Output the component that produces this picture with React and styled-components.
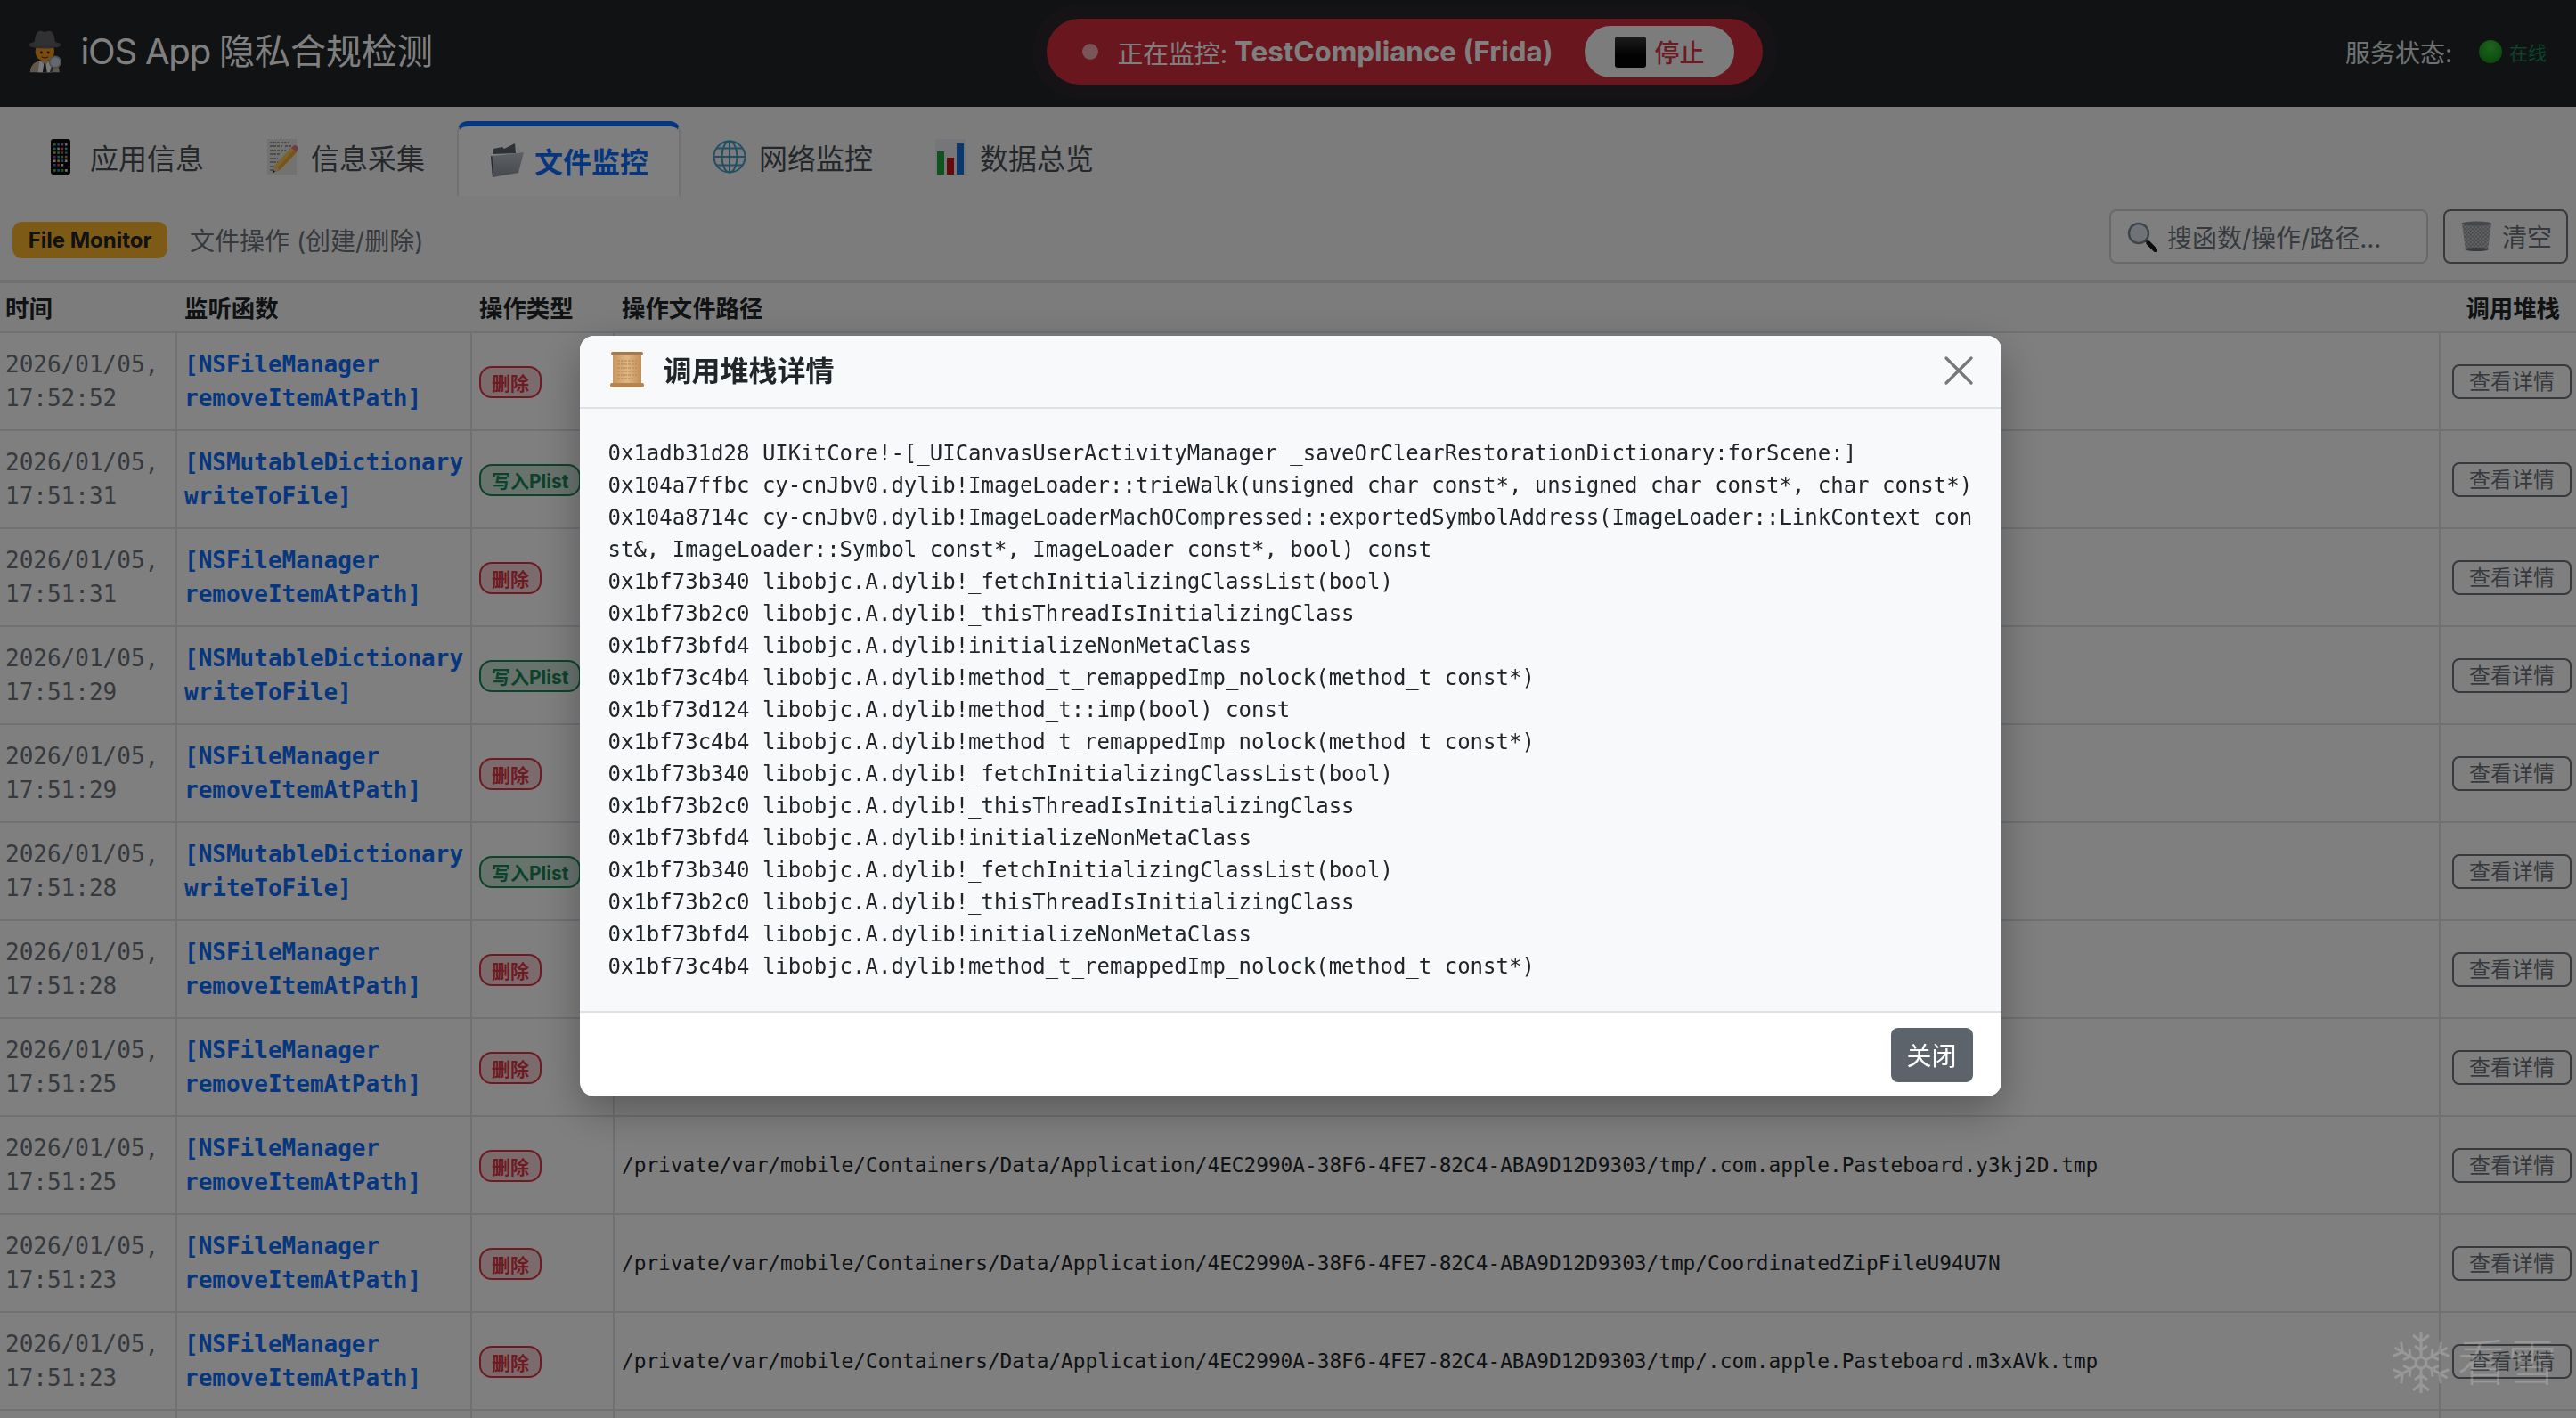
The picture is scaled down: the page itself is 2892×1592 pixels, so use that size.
import React from "react";
import styled, { createGlobalStyle } from "styled-components";

const SANS = `"Inter", "Noto Sans CJK SC", sans-serif`;
const MONO = `"DejaVu Sans Mono", "Noto Sans CJK SC", monospace`;

const GlobalStyle = createGlobalStyle`
  html, body {
    margin: 0;
    padding: 0;
    background: #fff;
    overflow: hidden;
  }
  * { box-sizing: border-box; }
`;

const BASE = "/private/var/mobile/Containers/Data/Application/4EC2990A-38F6-4FE7-82C4-ABA9D12D9303/tmp/";

const REMOVE = ["[NSFileManager", "removeItemAtPath]"];
const WRITE = ["[NSMutableDictionary", "writeToFile]"];

const rows = [
  { time: "17:52:52", fn: REMOVE, path: BASE + ".com.apple.uikit.tmp" },
  { time: "17:51:31", fn: WRITE, path: BASE + "state.plist" },
  { time: "17:51:31", fn: REMOVE, path: BASE + "state.plist" },
  { time: "17:51:29", fn: WRITE, path: BASE + "state.plist" },
  { time: "17:51:29", fn: REMOVE, path: BASE + "state.plist" },
  { time: "17:51:28", fn: WRITE, path: BASE + "state.plist" },
  { time: "17:51:28", fn: REMOVE, path: BASE + "state.plist" },
  { time: "17:51:25", fn: REMOVE, path: BASE + "state.plist" },
  { time: "17:51:25", fn: REMOVE, path: BASE + ".com.apple.Pasteboard.y3kj2D.tmp" },
  { time: "17:51:23", fn: REMOVE, path: BASE + "CoordinatedZipFileU94U7N" },
  { time: "17:51:23", fn: REMOVE, path: BASE + ".com.apple.Pasteboard.m3xAVk.tmp" },
];

const FETCH = "0x1bf73b340 libobjc.A.dylib!_fetchInitializingClassList(bool)";
const THIS = "0x1bf73b2c0 libobjc.A.dylib!_thisThreadIsInitializingClass";
const INIT = "0x1bf73bfd4 libobjc.A.dylib!initializeNonMetaClass";
const REMAP = "0x1bf73c4b4 libobjc.A.dylib!method_t_remappedImp_nolock(method_t const*)";

const stack = [
  "0x1adb31d28 UIKitCore!-[_UICanvasUserActivityManager _saveOrClearRestorationDictionary:forScene:]",
  "0x104a7ffbc cy-cnJbv0.dylib!ImageLoader::trieWalk(unsigned char const*, unsigned char const*, char const*)",
  "0x104a8714c cy-cnJbv0.dylib!ImageLoaderMachOCompressed::exportedSymbolAddress(ImageLoader::LinkContext const&, ImageLoader::Symbol const*, ImageLoader const*, bool) const",
  FETCH,
  THIS,
  INIT,
  REMAP,
  "0x1bf73d124 libobjc.A.dylib!method_t::imp(bool) const",
  REMAP,
  FETCH,
  THIS,
  INIT,
  FETCH,
  THIS,
  INIT,
  REMAP,
].join("\n");

/* emoji drawings */

const DetectiveIcon = () => (
  <svg width="42" height="48" viewBox="0 0 42 48">
    <path d="M4 48c0-9 6-14 17-14s17 5 17 14z" fill="#bfae92" />
    <path d="M15 34l6 6 6-6 2 14H13z" fill="#f1f1f1" />
    <path d="M20 38h2l1.500 10h-5z" fill="#22262c" />
    <circle cx="21" cy="24" r="11" fill="#f29a1f" />
    <circle cx="17" cy="25" r="1.500" fill="#3a2410" />
    <circle cx="25" cy="25" r="1.500" fill="#3a2410" />
    <path d="M17 30c2.500 1.500 5.500 1.500 8 0" stroke="#7a3f10" strokeWidth="1.200" fill="none" />
    <ellipse cx="21" cy="16" rx="19" ry="4.500" fill="#5a5a5e" />
    <path d="M9 15c0-4 1-14 6-15 3-.5 4 1 6 1s3-1.500 6-1c5 1 6 11 6 15-6 2-18 2-24 0z" fill="#626266" />
    <circle cx="33" cy="36" r="6.500" fill="#c5d3de" stroke="#9a9da2" strokeWidth="1.800" />
    <path d="M30 42l-2 6" stroke="#555" strokeWidth="2.500" />
  </svg>
);

const PHONE_DOTS = [
  "#3fbf55", "#2f8fe0", "#c060d0", "#d0d0d0",
  "#20b0d0", "#d0d0d0", "#e05050", "#30c0a0",
  "#e0b020", "#60c060", "#e04040", "#2f8fe0",
  "#c040c0", "#20a0e0", "#30c060", "#e08020",
  "#e0e0e0", "#e0c040", "#3090e0", "#f0f0f0",
  "#3080e0", "#e04050", "#e0e0e0", "#000",
];

const PhoneIcon = () => (
  <svg width="22" height="40" viewBox="0 0 22 40">
    <rect width="22" height="40" rx="3" fill="#0a0a0a" />
    {PHONE_DOTS.map((c, i) => (
      <rect key={i} x={3 + (i % 4) * 4.300} y={5 + Math.floor(i / 4) * 4.600} width="2.600" height="2.600" fill={c} />
    ))}
    {["#40c060", "#2f8fe0", "#30b060", "#e0e0e0"].map((c, i) => (
      <rect key={c} x={3 + i * 4.300} y="34" width="2.800" height="2.800" fill={c} />
    ))}
  </svg>
);

const MemoIcon = () => (
  <svg width="35" height="40" viewBox="0 0 35 40">
    <rect width="33" height="40" fill="#e4e4e2" />
    <path d="M3 4h22M3 8h14M20 8h7M3 13h18M3 17h12M3 22h9M3 26h10M3 31h8M3 35h6" stroke="#555" strokeWidth="1" strokeDasharray="3 1" />
    <path d="M27 10l6 5-19 20-8 3 3-8z" fill="#f0a92c" />
    <path d="M27 10l3 2.500L10 34l-3-3z" fill="#f8c75a" />
    <path d="M27 10l2.500-2.500c1.500-1 3.500-.5 4.500 1s1 3-.5 4.500L33 15z" fill="#e8747c" />
    <path d="M9 30l5 5-8 3z" fill="#e8c79a" />
    <path d="M6 38l1-3 2 2z" fill="#222" />
  </svg>
);

const FolderIcon = () => (
  <svg width="38" height="38" viewBox="0 0 38 38">
    <defs>
      <linearGradient id="folderFront" x1="0" y1="0" x2="0" y2="1">
        <stop offset="0" stopColor="#bcc3ca" />
        <stop offset="1" stopColor="#8b929a" />
      </linearGradient>
    </defs>
    <path d="M3 12l1-6 10-2 2 2 12-6 1 11z" fill="#5d6469" />
    <path d="M1 14l12-1 25-3-6 23L3 38z" fill="url(#folderFront)" />
    <path d="M1 14l2 24 1-1-1.500-22z" fill="#4d5359" />
  </svg>
);

const GlobeIcon = () => (
  <svg width="38" height="38" viewBox="0 0 38 38" fill="none" stroke="#43a0c6" strokeWidth="2">
    <circle cx="19" cy="19" r="17.500" />
    <ellipse cx="19" cy="19" rx="8.500" ry="17.500" />
    <path d="M19 1.500v35M1.500 19h35M4.500 9.500h29M4.500 28.500h29" />
  </svg>
);

const ChartIcon = () => (
  <svg width="34" height="40" viewBox="0 0 34 40">
    <rect width="34" height="40" fill="#e8edf2" />
    <rect x="2" y="14" width="8" height="26" fill="#1fa838" />
    <rect x="13" y="21" width="8" height="19" fill="#c8141c" />
    <rect x="24" y="5" width="8" height="35" fill="#1470d8" />
  </svg>
);

const StopIcon = () => (
  <svg width="35" height="35" viewBox="0 0 35 35">
    <defs>
      <linearGradient id="stopFill" x1="0" y1="0" x2="0" y2="1">
        <stop offset="0" stopColor="#3a3a3a" />
        <stop offset="0.6" stopColor="#050505" />
      </linearGradient>
    </defs>
    <rect width="35" height="35" rx="3" fill="url(#stopFill)" />
  </svg>
);

const GreenDot = () => (
  <svg width="26" height="26" viewBox="0 0 26 26">
    <defs>
      <radialGradient id="greenFill" cx="0.5" cy="0.3" r="0.8">
        <stop offset="0" stopColor="#3cc83c" />
        <stop offset="1" stopColor="#128a16" />
      </radialGradient>
    </defs>
    <circle cx="13" cy="13" r="13" fill="url(#greenFill)" />
  </svg>
);

const SearchIcon = () => (
  <svg width="34" height="34" viewBox="0 0 34 34" fill="none">
    <circle cx="13" cy="13" r="11" fill="#dfe7ee" stroke="#7d8a96" strokeWidth="2.500" />
    <path d="M21 21l3 3" stroke="#555" strokeWidth="3" />
    <path d="M24 24l8 8" stroke="#1b1b1b" strokeWidth="5" strokeLinecap="round" />
  </svg>
);

const TrashIcon = () => (
  <svg width="35" height="34" viewBox="0 0 35 34">
    <defs>
      <pattern id="trashMesh" width="3" height="3" patternUnits="userSpaceOnUse" patternTransform="rotate(45)">
        <rect width="3" height="3" fill="#c4c8cc" />
        <path d="M0 0h3M0 0v3" stroke="#5f646a" strokeWidth="0.800" />
      </pattern>
    </defs>
    <path d="M1 3l4 30h25l4-30z" fill="url(#trashMesh)" />
    <ellipse cx="17.500" cy="3" rx="17" ry="2.500" fill="#8c9196" />
    <ellipse cx="17.500" cy="32" rx="13" ry="2" fill="#70757a" />
  </svg>
);

const ScrollIcon = () => (
  <svg width="38" height="40" viewBox="0 0 38 40">
    <defs>
      <linearGradient id="scrollFill" x1="0" y1="0" x2="1" y2="0">
        <stop offset="0" stopColor="#c9975f" />
        <stop offset="0.5" stopColor="#dfb684" />
        <stop offset="1" stopColor="#c28f58" />
      </linearGradient>
    </defs>
    <rect x="3" y="3" width="32" height="34" fill="url(#scrollFill)" />
    <path d="M8 10h22M8 14h22M8 18h22M8 22h22M8 26h22M8 30h18" stroke="#b08350" strokeWidth="1.200" strokeDasharray="3 1" />
    <rect x="1" y="0" width="36" height="4" rx="2" fill="#a8794a" />
    <rect x="0" y="35" width="38" height="5" rx="2" fill="#b4854f" />
  </svg>
);

const Snowflake = () => (
  <svg width="66" height="70" viewBox="-33 -35 66 70" fill="none" stroke="#fff" strokeWidth="3">
    {[0, 60, 120, 180, 240, 300].map((a) => (
      <g key={a} transform={`rotate(${a})`}>
        <path d="M0 -6V-34M0 -24l-9 -7M0 -24l9 -7M0 -14l-7 -5M0 -14l7 -5" />
      </g>
    ))}
    <circle r="6" />
  </svg>
);

const CloseGlyph = () => (
  <svg width="32" height="32" viewBox="0 0 32 32" stroke="#777" strokeWidth="3.200" strokeLinecap="round">
    <path d="M2 2l28 28M30 2L2 30" />
  </svg>
);

/* page */

const Page = styled.div`
  height: 1592px;
  overflow: hidden;
  font-family: ${SANS};
  color: #212529;
`;

const Navbar = styled.header`
  height: 120px;
  background: #212529;
  display: flex;
  justify-content: space-between;
  align-items: center;
  padding: 0 33px 4px 30px;
`;

const Brand = styled.div`
  display: flex;
  align-items: center;
  gap: 20px;
  width: 456px;
  font-size: 40px;
  color: #fff;
  line-height: 1;
  white-space: nowrap;
`;

const BrandLatin = styled.span`
  letter-spacing: -1.200px;
`;

const MonitorPill = styled.div`
  display: flex;
  align-items: center;
  flex: none;
  width: 804px;
  height: 74px;
  margin-left: 36px;
  padding: 0 32px 0 40px;
  border-radius: 37px;
  background: #d22d3c;
  color: #fff;
  font-size: 28.800px;
  white-space: nowrap;
  box-shadow: 0 0 0 16px rgba(220, 53, 69, 0.05);
`;

const PulseDot = styled.span`
  width: 18px;
  height: 18px;
  border-radius: 50%;
  background: #f2a8b2;
  margin-right: 21px;
`;

const MonitorName = styled.strong`
  font-size: 31.400px;
  font-weight: 700;
  margin-left: 8px;
`;

const StopButton = styled.button`
  display: flex;
  align-items: center;
  justify-content: center;
  gap: 9px;
  margin-left: auto;
  width: 168px;
  height: 58px;
  border: 0;
  border-radius: 29px;
  background: #f8f9fa;
  color: #dc3545;
  font: 500 28px ${SANS};
`;

const ServiceStatus = styled.div`
  display: flex;
  align-items: center;
  color: #dfe0e1;
  font-size: 28px;
  white-space: nowrap;
`;

const OnlineText = styled.span`
  color: #198754;
  font-size: 21px;
  margin-left: 8px;
`;

const StatusDot = styled.span`
  display: flex;
  margin-left: 30px;
`;

const TabBar = styled.nav`
  display: flex;
  gap: 2px;
  height: 100px;
  padding: 16px 0 0 23px;
  background: #f8f9fa;
`;

const Tab = styled.div`
  display: flex;
  align-items: center;
  height: 84px;
  padding: 0 ${({ $active }) => ($active ? "34px" : "32px")} ${({ $active }) => ($active ? "3px" : "6px")} 32px;
  border: 2px solid ${({ $active }) => ($active ? "#dee2e6" : "transparent")};
  border-bottom: 0;
  border-top: ${({ $active }) => ($active ? "6px solid #0d6efd" : "2px solid transparent")};
  border-radius: 12px 12px 0 0;
  background: ${({ $active }) => ($active ? "#fff" : "transparent")};
  color: ${({ $active }) => ($active ? "#0d6efd" : "#495057")};
  font-size: 32px;
  font-weight: ${({ $active }) => ($active ? 700 : 400)};
`;

const TabIcon = styled.span`
  display: flex;
  margin: 0 ${({ $gap }) => $gap}px 0 ${({ $ml }) => $ml || 0}px;
`;

const Toolbar = styled.div`
  display: flex;
  align-items: center;
  height: 98px;
  padding: 0 9px 4px 14px;
  background: #f8f9fa;
  border-bottom: 4px solid #dee2e6;
`;

const ToolbarLabel = styled.div`
  display: flex;
  align-items: center;
  gap: 25px;
  padding-top: 8px;
  color: #6c757d;
  font-size: 28px;
`;

const Badge = styled.span`
  display: flex;
  align-items: center;
  justify-content: center;
  width: 174px;
  height: 41px;
  border-radius: 11px;
  background: #fbb42a;
  color: #212529;
  font-size: 24px;
  font-weight: 700;
`;

const SearchBox = styled.div`
  display: flex;
  align-items: center;
  gap: 11px;
  width: 358px;
  height: 61px;
  margin-left: auto;
  padding: 1px 18px 0;
  border: 2px solid #ced4da;
  border-radius: 8px;
  background: #fff;
  color: #6c757d;
  font-size: 28px;
`;

const ClearButton = styled.button`
  display: flex;
  align-items: center;
  gap: 11px;
  width: 140px;
  height: 61px;
  margin-left: 17px;
  padding: 0 16px 0 18px;
  border: 2px solid #6c757d;
  border-radius: 8px;
  background: transparent;
  color: #6c757d;
  font: 400 28px ${SANS};
  white-space: nowrap;
`;

const Table = styled.table`
  width: 100%;
  table-layout: fixed;
  border-collapse: separate;
  border-spacing: 0;
`;

const HeadCell = styled.th`
  height: 56px;
  padding: 0 ${({ $right }) => ($right ? "18px" : "8px")} 2px 8px;
  background: #f8f9fa;
  border-bottom: 2px solid #dee2e6;
  font-size: 26.400px;
  font-weight: 700;
  text-align: ${({ $right }) => ($right ? "right" : "left")};
  color: #212529;
  &:first-child { padding-left: 6px; }
`;

const Cell = styled.td`
  height: 110px;
  padding: 0 8px;
  border-bottom: 2px solid #dee2e6;
  border-right: 2px solid #dee2e6;
  background: #fff;
  vertical-align: middle;
  &:last-child { border-right: 0; }
`;

const TimeCell = styled(Cell)`
  padding-left: 6px;
  font: 400 26px/38.400px ${MONO};
  color: #6c757d;
`;

const FnCell = styled(Cell)`
  font: 700 26px/38.400px ${MONO};
  color: #0d6efd;
`;

const PathCell = styled(Cell)`
  font: 400 22.760px/34px ${MONO};
  color: #212529;
  white-space: nowrap;
  overflow: hidden;
`;

const OpBadge = styled.span`
  display: inline-flex;
  align-items: center;
  justify-content: center;
  height: 36px;
  margin-top: 2px;
  padding: 0 12px;
  border: 2px solid ${({ $kind }) => ($kind === "write" ? "#198754" : "#dc3545")};
  border-radius: 14px;
  background: ${({ $kind }) => ($kind === "write" ? "#d1e7dd" : "#f8d7da")};
  color: ${({ $kind }) => ($kind === "write" ? "#198754" : "#dc3545")};
  font-size: 21px;
  font-weight: 700;
  white-space: nowrap;
  vertical-align: middle;
`;

const DetailButton = styled.button`
  display: block;
  width: 134px;
  height: 39px;
  margin: 1px 0 0 5px;
  padding: 0;
  border: 2px solid #6c757d;
  border-radius: 8px;
  background: transparent;
  color: #6c757d;
  font: 400 24px/1 ${SANS};
`;

const Backdrop = styled.div`
  position: fixed;
  inset: 0;
  display: flex;
  justify-content: center;
  align-items: flex-start;
  padding: 377px 0 0 5px;
  background: rgba(0, 0, 0, 0.5);
`;

const Modal = styled.div`
  width: 1596px;
  border-radius: 16px;
  background: #fff;
  overflow: hidden;
  box-shadow: 0 16px 48px rgba(0, 0, 0, 0.3);
`;

const ModalHeader = styled.div`
  display: flex;
  align-items: center;
  gap: 22px;
  height: 82px;
  padding: 0 32px 4px 34px;
  background: #f8f9fa;
  border-bottom: 2px solid #dee2e6;
`;

const ModalTitle = styled.h5`
  flex: 1;
  margin: 0 0 3px;
  font-size: 32px;
  font-weight: 700;
  color: #212529;
`;

const CloseButton = styled.button`
  display: flex;
  margin-top: 2px;
  padding: 0;
  border: 0;
  background: none;
`;

const StackText = styled.pre`
  margin: 0;
  padding: 32px 32px 0;
  height: 676px;
  background: #f8f9fa;
  font: 400 24px/36px ${MONO};
  color: #212529;
  white-space: pre-wrap;
  word-break: break-all;
`;

const ModalFooter = styled.div`
  display: flex;
  justify-content: flex-end;
  align-items: center;
  height: 96px;
  padding: 0 32px 0 0;
  border-top: 2px solid #dee2e6;
`;

const FooterButton = styled.button`
  width: 92px;
  height: 61px;
  border: 0;
  border-radius: 8px;
  background: #5c636a;
  color: #fff;
  font: 400 28px ${SANS};
`;

const Watermark = styled.div`
  position: fixed;
  right: 21px;
  bottom: 27px;
  display: flex;
  align-items: center;
  gap: 8px;
  opacity: 0.2;
  color: #fff;
  font-size: 56px;
  font-weight: 300;
  line-height: 1;
`;

const App = () => {
  return (
    <Page>
      <GlobalStyle />
      <Navbar>
        <Brand>
          <DetectiveIcon />
          <span>
            <BrandLatin>iOS App </BrandLatin>隐私合规检测
          </span>
        </Brand>
        <MonitorPill>
          <PulseDot />
          <span>正在监控:</span>
          <MonitorName>TestCompliance (Frida)</MonitorName>
          <StopButton>
            <StopIcon />
            停止
          </StopButton>
        </MonitorPill>
        <ServiceStatus>
          服务状态:
          <StatusDot>
            <GreenDot />
          </StatusDot>
          <OnlineText>在线</OnlineText>
        </ServiceStatus>
      </Navbar>

      <TabBar>
        <Tab>
          <TabIcon $gap={22}><PhoneIcon /></TabIcon>
          应用信息
        </Tab>
        <Tab>
          <TabIcon $ml={1} $gap={14}><MemoIcon /></TabIcon>
          信息采集
        </Tab>
        <Tab $active>
          <TabIcon $ml={3} $gap={12}><FolderIcon /></TabIcon>
          文件监控
        </Tab>
        <Tab>
          <TabIcon $gap={14}><GlobeIcon /></TabIcon>
          网络监控
        </Tab>
        <Tab>
          <TabIcon $gap={16}><ChartIcon /></TabIcon>
          数据总览
        </Tab>
      </TabBar>

      <Toolbar>
        <ToolbarLabel>
          <Badge>File Monitor</Badge>
          文件操作 (创建/删除)
        </ToolbarLabel>
        <SearchBox>
          <SearchIcon />
          搜函数/操作/路径...
        </SearchBox>
        <ClearButton>
          <TrashIcon />
          清空
        </ClearButton>
      </Toolbar>

      <Table>
        <colgroup>
          <col width="199" />
          <col width="331" />
          <col width="160" />
          <col width="2050" />
          <col />
        </colgroup>
        <thead>
          <tr>
            <HeadCell>时间</HeadCell>
            <HeadCell>监听函数</HeadCell>
            <HeadCell>操作类型</HeadCell>
            <HeadCell>操作文件路径</HeadCell>
            <HeadCell $right>调用堆栈</HeadCell>
          </tr>
        </thead>
        <tbody>
          {rows.map((row, i) => (
            <tr key={i}>
              <TimeCell>
                2026/01/05,
                <br />
                {row.time}
              </TimeCell>
              <FnCell>
                {row.fn[0]}
                <br />
                {row.fn[1]}
              </FnCell>
              <Cell>
                {row.fn === WRITE ? (
                  <OpBadge $kind="write">写入Plist</OpBadge>
                ) : (
                  <OpBadge $kind="delete">删除</OpBadge>
                )}
              </Cell>
              <PathCell>{row.path}</PathCell>
              <Cell>
                <DetailButton>查看详情</DetailButton>
              </Cell>
            </tr>
          ))}
          <tr>
            <Cell />
            <Cell />
            <Cell />
            <Cell />
            <Cell />
          </tr>
        </tbody>
      </Table>

      <Backdrop>
        <Modal>
          <ModalHeader>
            <ScrollIcon />
            <ModalTitle>调用堆栈详情</ModalTitle>
            <CloseButton>
              <CloseGlyph />
            </CloseButton>
          </ModalHeader>
          <StackText>{stack}</StackText>
          <ModalFooter>
            <FooterButton>关闭</FooterButton>
          </ModalFooter>
        </Modal>
      </Backdrop>

      <Watermark>
        <Snowflake />
        <span>看雪</span>
      </Watermark>
    </Page>
  );
};

export default App;
